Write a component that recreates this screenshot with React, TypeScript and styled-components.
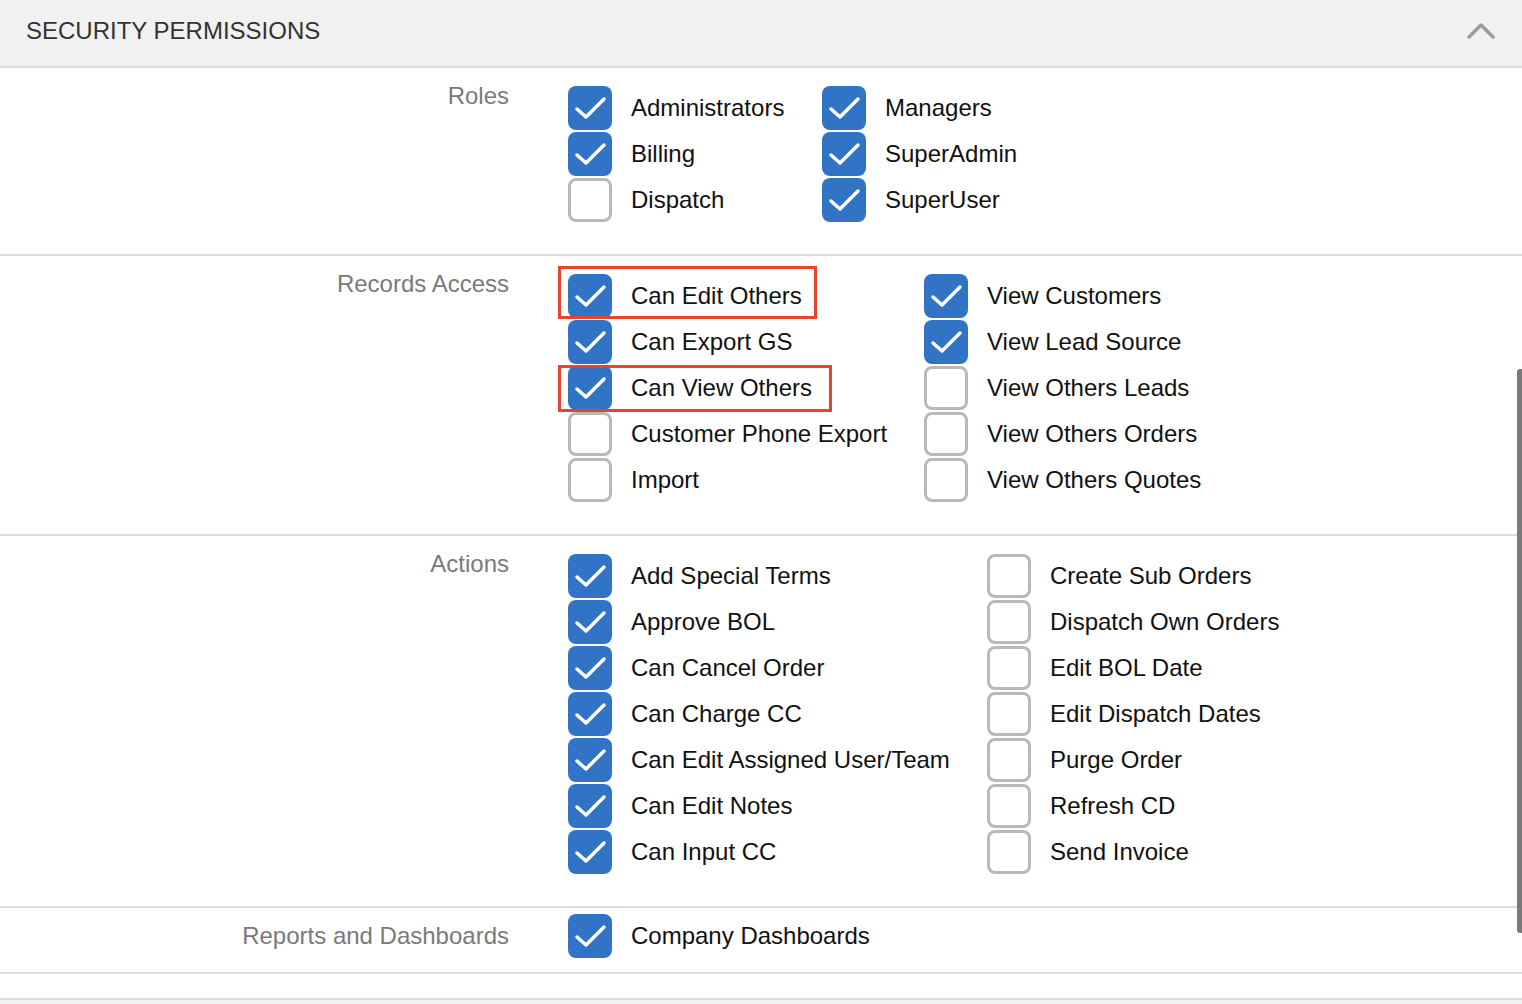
import styled, { createGlobalStyle } from 'styled-components'

const GlobalStyle = createGlobalStyle`
  html, body {
    margin: 0;
    padding: 0;
    background: #ffffff;
  }
  body {
    font-family: "Liberation Sans", Arial, Helvetica, sans-serif;
    overflow: hidden;
  }
`

const Panel = styled.div`
  position: relative;
  width: 1522px;
  height: 1004px;
  overflow: hidden;
  background: #ffffff;
`

const Header = styled.div`
  display: flex;
  align-items: center;
  justify-content: space-between;
  height: 62px;
  padding: 0 27px 4px 26px;
  background: #f1f1f1;
  border-bottom: 2px solid #dddddd;
`

const Title = styled.h2`
  margin: 0;
  font-size: 24px;
  font-weight: 400;
  color: #333333;
`

const Section = styled.div<{ $compact?: boolean }>`
  display: flex;
  padding: ${(p) => (p.$compact ? '6px 0 14px' : '18px 0 32px')};
  border-bottom: 2px solid #dddddd;
`

const Spacer = styled.div`
  height: 24px;
  border-bottom: 2px solid #dddddd;
`

const NextHeader = styled.div`
  height: 40px;
  background: #f1f1f1;
`

const Label = styled.div<{ $compact?: boolean }>`
  flex-shrink: 0;
  width: 509px;
  margin-top: ${(p) => (p.$compact ? '8px' : '-4px')};
  font-size: 24px;
  line-height: 28px;
  color: #7a7a7a;
  text-align: right;
`

const Columns = styled.div`
  display: flex;
  margin-left: 59px;
`

const Column = styled.div<{ $width: number }>`
  display: flex;
  flex-direction: column;
  gap: 2px;
  width: ${(p) => p.$width}px;
`

const Item = styled.label`
  position: relative;
  display: flex;
  align-items: center;
  width: max-content;
  height: 44px;
  font-size: 24px;
  color: #111111;
`

const Box = styled.span<{ $checked: boolean }>`
  display: flex;
  flex-shrink: 0;
  width: 44px;
  height: 44px;
  box-sizing: border-box;
  border-radius: 8px;
  background: ${(p) => (p.$checked ? '#3174c5' : '#ffffff')};
  border: ${(p) => (p.$checked ? 'none' : '3px solid #b9b9b9')};
`

const ItemText = styled.span`
  margin-left: 19px;
  white-space: nowrap;
`

const Highlight = styled.span<{ $left: number; $top: number; $w: number; $h: number }>`
  position: absolute;
  left: ${(p) => p.$left}px;
  top: ${(p) => p.$top}px;
  width: ${(p) => p.$w}px;
  height: ${(p) => p.$h}px;
  box-sizing: border-box;
  border: 3px solid #e8442c;
  pointer-events: none;
`

const Scrollbar = styled.div`
  position: absolute;
  right: 0;
  top: 369px;
  width: 5px;
  height: 564px;
  border-radius: 3px 0 0 3px;
  background: #7a7a7a;
`

type Mark = { left: number; top: number; w: number; h: number }
type Perm = { name: string; on: boolean; mark?: Mark }

const Check = () => (
  <svg width="44" height="44" viewBox="0 0 44 44">
    <polyline
      points="9,23 18,31 36,13"
      fill="none"
      stroke="#ffffff"
      strokeWidth="3.5"
      strokeLinecap="round"
      strokeLinejoin="round"
    />
  </svg>
)

const Chevron = () => (
  <svg width="28" height="16" viewBox="0 0 28 16">
    <polyline
      points="2,14 14,2 26,14"
      fill="none"
      stroke="#9c9c9c"
      strokeWidth="3.5"
      strokeLinecap="round"
      strokeLinejoin="round"
    />
  </svg>
)

const groups: { label: string; widths: number[]; cols: Perm[][]; compact?: boolean }[] = [
  {
    label: 'Roles',
    widths: [254, 300],
    cols: [
      [
        { name: 'Administrators', on: true },
        { name: 'Billing', on: true },
        { name: 'Dispatch', on: false },
      ],
      [
        { name: 'Managers', on: true },
        { name: 'SuperAdmin', on: true },
        { name: 'SuperUser', on: true },
      ],
    ],
  },
  {
    label: 'Records Access',
    widths: [356, 400],
    cols: [
      [
        { name: 'Can Edit Others', on: true, mark: { left: -10, top: -8, w: 259, h: 53 } },
        { name: 'Can Export GS', on: true },
        { name: 'Can View Others', on: true, mark: { left: -10, top: -1, w: 274, h: 47 } },
        { name: 'Customer Phone Export', on: false },
        { name: 'Import', on: false },
      ],
      [
        { name: 'View Customers', on: true },
        { name: 'View Lead Source', on: true },
        { name: 'View Others Leads', on: false },
        { name: 'View Others Orders', on: false },
        { name: 'View Others Quotes', on: false },
      ],
    ],
  },
  {
    label: 'Actions',
    widths: [419, 400],
    cols: [
      [
        { name: 'Add Special Terms', on: true },
        { name: 'Approve BOL', on: true },
        { name: 'Can Cancel Order', on: true },
        { name: 'Can Charge CC', on: true },
        { name: 'Can Edit Assigned User/Team', on: true },
        { name: 'Can Edit Notes', on: true },
        { name: 'Can Input CC', on: true },
      ],
      [
        { name: 'Create Sub Orders', on: false },
        { name: 'Dispatch Own Orders', on: false },
        { name: 'Edit BOL Date', on: false },
        { name: 'Edit Dispatch Dates', on: false },
        { name: 'Purge Order', on: false },
        { name: 'Refresh CD', on: false },
        { name: 'Send Invoice', on: false },
      ],
    ],
  },
  {
    label: 'Reports and Dashboards',
    widths: [400],
    compact: true,
    cols: [[{ name: 'Company Dashboards', on: true }]],
  },
]

export default function App() {
  return (
    <>
      <GlobalStyle />
      <Panel>
        <Header>
          <Title>SECURITY PERMISSIONS</Title>
          <Chevron />
        </Header>
        {groups.map((g) => (
          <Section key={g.label} $compact={g.compact}>
            <Label $compact={g.compact}>{g.label}</Label>
            <Columns>
              {g.cols.map((col, i) => (
                <Column key={i} $width={g.widths[i]}>
                  {col.map((p) => (
                    <Item key={p.name}>
                      <Box $checked={p.on}>{p.on && <Check />}</Box>
                      <ItemText>{p.name}</ItemText>
                      {p.mark && (
                        <Highlight
                          $left={p.mark.left}
                          $top={p.mark.top}
                          $w={p.mark.w}
                          $h={p.mark.h}
                        />
                      )}
                    </Item>
                  ))}
                </Column>
              ))}
            </Columns>
          </Section>
        ))}
        <Spacer />
        <NextHeader />
        <Scrollbar />
      </Panel>
    </>
  )
}
